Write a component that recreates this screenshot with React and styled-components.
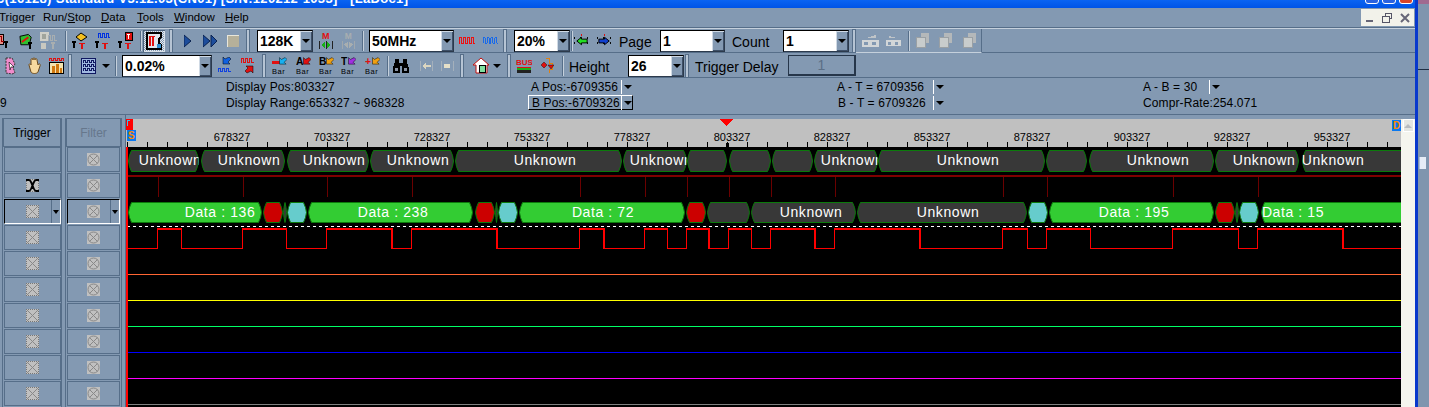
import React from 'react';
import styled, { createGlobalStyle } from 'styled-components';

const PANEL = '#8399b2';
const EDGE = '#566e89';
const SANS = '"Liberation Sans", Arial, sans-serif';

const GlobalStyle = createGlobalStyle`
  html, body { margin: 0; padding: 0; background: ${PANEL}; overflow: hidden; }
  body { font-family: ${SANS}; color: #000; }
`;

const Frame = styled.div`
  display: flex;
  width: 1429px;
  height: 407px;
  overflow: hidden;
`;

const AppWindow = styled.div`
  display: flex;
  flex-direction: column;
  width: 1415px;
  flex: none;
  background: ${PANEL};
`;

const WindowBorder = styled.div`
  width: 3px;
  flex: none;
  background: #0838cc;
`;

const BehindWindow = styled.div`
  flex: 1;
  display: flex;
  flex-direction: column;
  background: #7f95ae;
`;

const BehindTop = styled.div`
  height: 4px;
  background: #a06a90;
`;

const BehindToolbar = styled.div`
  height: 65px;
  border-bottom: 1px solid #1f2f44;
`;

const BehindScroll = styled.div`
  width: 6px;
  height: 12px;
  margin: 87px 0 0 1px;
  background: #e6ecf6;
  border-left: 1px solid #a9bde0;
`;

const TitleBar = styled.div`
  height: 8px;
  flex: none;
  display: flex;
  justify-content: space-between;
  align-items: flex-end;
  overflow: hidden;
  background: linear-gradient(#0a64f2, #0054e6);
`;

const TitleText = styled.div`
  margin: -10px 0 0 -5px;
  font: bold 13px/18px ${SANS};
  letter-spacing: 0.32px;
  color: #fff;
  white-space: nowrap;
  align-self: flex-start;
`;

const TitleButtons = styled.div`
  display: flex;
  gap: 3px;
  margin: 0 2px 4px 0;
`;

const TitleButton = styled.div`
  width: 12px;
  height: 12px;
  border: 1px solid #fff;
  border-radius: 3px;
  background: ${(p) => (p.$close ? '#d8452a' : '#2a63e0')};
`;

const MenuBar = styled.div`
  height: 20px;
  flex: none;
  display: flex;
  justify-content: space-between;
  align-items: center;
  border-bottom: 1px solid ${EDGE};
  box-sizing: border-box;
`;

const MenuList = styled.div`
  display: flex;
  margin: -2px 0 0 -1px;
`;

const MenuItem = styled.div`
  font-size: 11.5px;
  line-height: 16px;
  width: ${(p) => p.$w}px;
`;

const MdiButtons = styled.div`
  display: flex;
  align-items: center;
  justify-content: space-around;
  width: 53px;
  height: 17px;
  margin-right: 1px;
  background: #f2f2ea;
`;

const Toolbar = styled.div`
  height: 25px;
  flex: none;
  display: flex;
  align-items: center;
  box-sizing: border-box;
  border-top: 1px solid ${(p) => (p.$light ? '#c5d0dc' : 'transparent')};
  border-bottom: 1px solid ${EDGE};
  white-space: nowrap;
`;

const Slot = styled.div`
  flex: none;
  width: ${(p) => p.$w}px;
  margin-left: ${(p) => p.$ml}px;
  height: 20px;
  display: flex;
  align-items: center;
  justify-content: center;
`;

const Pressed = styled(Slot)`
  height: 22px;
  background: repeating-conic-gradient(#e4eaf0 0 25%, #8399b2 0 50%) 0 0 / 2px 2px;
  box-shadow: inset 1px 1px 0 #4c627c, inset -1px -1px 0 #d8e0e8;
`;

const Sep = styled.div`
  flex: none;
  width: 1px;
  height: 20px;
  margin-left: ${(p) => p.$ml}px;
  background: #c5d0dc;
  border-left: 1px solid ${EDGE};
`;

const Grip = styled.div`
  flex: none;
  width: 2px;
  height: 22px;
  margin-left: ${(p) => p.$ml}px;
  background: #b6c4d4;
  border: 1px solid ${EDGE};
`;

const ToolLabel = styled.div`
  flex: none;
  width: ${(p) => p.$w}px;
  margin: 2px 0 0 ${(p) => p.$ml}px;
  font-size: 14px;
  line-height: 20px;
`;

const ComboBox = styled.div`
  flex: none;
  display: flex;
  width: ${(p) => p.$w}px;
  margin-left: ${(p) => p.$ml}px;
  height: 22px;
  box-sizing: border-box;
  border: 1px solid #000;
  border-right-color: #2c3a4c;
  border-bottom-color: #2c3a4c;
  background: #fff;
`;

const ComboValue = styled.div`
  flex: 1;
  padding-left: 2px;
  font: bold 14px/20px ${SANS};
`;

const ComboArrow = styled.div`
  width: 12px;
  flex: none;
  display: flex;
  align-items: center;
  justify-content: center;
  background: ${PANEL};
  box-shadow: inset 1px 1px 0 #cfd9e4, inset -1px -1px 0 #3e5068;
`;

const Caret = styled.div`
  width: 0;
  height: 0;
  flex: none;
  border-left: 4px solid transparent;
  border-right: 4px solid transparent;
  border-top: 4px solid #000;
`;

const DisabledBox = styled.div`
  flex: none;
  width: ${(p) => p.$w}px;
  margin-left: ${(p) => p.$ml}px;
  height: 21px;
  box-sizing: border-box;
  border: 1px solid #26364a;
  border-width: 1px 2px 2px 1px;
  text-align: center;
  font-size: 14px;
  line-height: 18px;
  color: #5c6f86;
`;

const DisabledEnd = styled.div`
  display: flex;
  align-items: center;
  align-self: stretch;
  border-bottom: 1px solid #c5d0dc;
  border-right: 1px solid ${EDGE};
  margin-bottom: -1px;
  padding-right: 3px;
`;

const InfoBar = styled.div`
  height: 37px;
  flex: none;
  box-sizing: border-box;
  display: grid;
  grid-template-columns: 226px 302px 309px 306px 1fr;
  grid-template-rows: 16px 16px;
  padding-top: 1px;
  border-bottom: 1px solid ${EDGE};
  font-size: 12px;
  letter-spacing: 0.12px;
`;

const InfoCell = styled.div`
  display: flex;
  align-items: center;
  white-space: nowrap;
  padding-left: ${(p) => p.$pl || 0}px;
`;

const InfoText = styled.div`
  width: ${(p) => p.$w}px;
  flex: none;
`;

const InfoDivider = styled.div`
  width: 1px;
  height: 14px;
  background: #fff;
  margin-right: 2px;
  flex: none;
`;

const SelectedInfo = styled(InfoCell)`
  width: 105px;
  height: 15px;
  box-sizing: border-box;
  border: 1px solid;
  border-color: #fff #000 #000 #fff;
`;

const Main = styled.div`
  flex: 1;
  display: flex;
  min-height: 0;
`;

const SidePanel = styled.div`
  width: 126px;
  flex: none;
  display: flex;
  box-sizing: border-box;
  padding: 3px 0 0 2px;
  gap: 3px;
  border-right: 1px solid ${EDGE};
  overflow: hidden;
`;

const SideColumn = styled.div`
  width: ${(p) => p.$w}px;
  flex: none;
  box-sizing: border-box;
  display: flex;
  flex-direction: column;
  align-items: center;
  border-left: 1px solid ${EDGE};
  border-right: 1px solid ${EDGE};
`;

const SideHeader = styled.div`
  width: 100%;
  height: 29px;
  flex: none;
  box-sizing: border-box;
  border: 1px solid ${EDGE};
  display: flex;
  align-items: center;
  justify-content: center;
  font-size: 12px;
  color: ${(p) => (p.$muted ? '#66778c' : '#000')};
`;

const SideCell = styled.div`
  position: relative;
  width: ${(p) => p.$w}px;
  height: 25px;
  flex: none;
  margin-bottom: 1px;
  box-sizing: border-box;
  border: 1px solid;
  border-color: ${(p) => (p.$selected ? '#000 #fff #fff #000' : EDGE)};
  display: flex;
  align-items: center;
  justify-content: center;
`;

const CellDrop = styled.div`
  position: absolute;
  top: 0;
  right: 0;
  bottom: 0;
  width: 8px;
  border-left: 1px solid ${EDGE};
  display: flex;
  align-items: center;
  justify-content: center;
  & > div {
    border-left-width: 3px;
    border-right-width: 3px;
  }
`;

const WaveSvg = styled.svg`
  width: 1275px;
  height: 292px;
  flex: none;
  display: block;
  margin-top: 0;
`;

const RulerLabel = styled.text`
  font: 11px ${SANS};
  fill: #000;
  text-anchor: middle;
`;

const BusLabel = styled.text`
  font: 14px ${SANS};
  letter-spacing: 0.6px;
  fill: #fff;
  text-anchor: middle;
`;

const MarkerLabel = styled.text`
  font: bold 10px ${SANS};
  fill: #ff8a00;
`;

const ScrollBar = styled.div`
  width: 14px;
  flex: none;
  margin-top: 4px;
  background: #f5f5ee;
  display: flex;
  justify-content: center;
`;

const ScrollUp = styled.div`
  width: 11px;
  height: 13px;
  background: #e4e6e2;
  border: 1px solid #fff;
  box-sizing: border-box;
  display: flex;
  align-items: center;
  justify-content: center;
  &::after {
    content: '';
    border-left: 4px solid transparent;
    border-right: 4px solid transparent;
    border-bottom: 4px solid #b8bcc0;
  }
`;

// toolbar drawings
const Ico = ({ w = 16, h = 18, children }) => (
  <svg width={w} height={h} viewBox={`0 0 ${w} ${h}`} shapeRendering="crispEdges">{children}</svg>
);

const Pin = ({ x, y, c = '#000' }) => (
  <path d={`M${x} ${y}h4v2h-1v5h-2v-5h-1z`} fill={c} />
);

const Pulse = ({ x, y, c, n = 3, w = 2, h = 4 }) => {
  let d = `M${x} ${y + h}`;
  for (let i = 0; i < n; i++) d += `v-${h}h${w}v${h}h${w}`;
  return <path d={d} fill="none" stroke={c} strokeWidth="1" />;
};

const WaveIcon = ({ c }) => (
  <Ico h={10}><Pulse x={0.5} y={1.5} c={c} n={4} w={2} h={6} /></Ico>
);

const PlayIcon = ({ n = 1 }) => (
  <Ico w={n === 1 ? 8 : 15} h={14}>
    <path d="M0 1l7 6-7 6z" fill="#1d4d9c" stroke="#0b2350" strokeWidth="1" shapeRendering="auto" />
    {n > 1 && <path d="M8 1l6 6-6 6z" fill="#1d4d9c" stroke="#0b2350" strokeWidth="1" shapeRendering="auto" />}
  </Ico>
);

const WaveBoxIcon = () => (
  <Ico w={17} h={16}>
    <rect x="0" y="1" width="10" height="10" fill="#e98a84" stroke="#000" />
    <Pulse x={2.5} y={3.5} c="#900" n={2} w={2} h={5} />
    <Pin x={11} y={8} />
  </Ico>
);

const GreenBoxIcon = () => (
  <Ico h={16}>
    <path d="M1 3l9-2 3 3-2 8-9 0z" fill="#2fbf2f" stroke="#000" shapeRendering="auto" />
    <path d="M3 9l7-5" stroke="#e01010" strokeWidth="2" shapeRendering="auto" />
    <Pin x={10} y={9} />
  </Ico>
);

const GhostTrigIcon = () => (
  <Ico w={18} h={19}>
    <rect x="0" y="1" width="9" height="9" fill="#cfcfc8" />
    <rect x="2" y="3" width="4" height="5" fill="#a0a49c" />
    <Pulse x={8.5} y={4.5} c="#a8aeb0" n={2} w={2} h={5} />
    <rect x="1" y="12" width="5" height="6" fill="#c8c8c0" />
    <Pin x={11} y={11} c="#a8aeb0" />
  </Ico>
);

const TrigBadgeIcon = ({ kind }) => (
  <Ico w={15} h={18}>
    <Pin x={0} y={9} />
    {kind === 'eye' && <path d="M4 5l5-4 6 4-6 4z" fill="#f4c020" stroke="#000" shapeRendering="auto" />}
    {kind === 'wave' && <Pulse x={3.5} y={1.5} c="#0030e0" n={3} w={2} h={4} />}
    {kind === 'box' && <><rect x="7" y="0" width="7" height="8" fill="#e01010" stroke="#000" /><rect x="9" y="2" width="3" height="1" fill="#fff" /><rect x="10" y="2" width="1" height="5" fill="#fff" /></>}
    <path d="M7 11h6v1h-2v5h-2v-5h-2z" fill="#e01010" />
  </Ico>
);

const TimeBaseIcon = () => (
  <Ico w={18} h={18}>
    <path d="M2 1h14v4l-2 2v4l2 2v4h-14z" fill="#dfe6ee" stroke="#000" strokeWidth="2" />
    <rect x="4" y="4" width="2" height="10" fill="#e01010" />
    <rect x="7" y="4" width="2" height="10" fill="#e01010" />
    <rect x="4" y="4" width="6" height="1" fill="#e01010" />
    <rect x="12" y="12" width="4" height="4" fill="#2f8fd0" />
  </Ico>
);

const StopIcon = () => (
  <Ico w={12} h={12}>
    <rect x="0" y="0" width="12" height="12" fill="#b5b09a" stroke="#e8e6da" />
  </Ico>
);

const MergeIcon = ({ ghost }) => (
  <Ico h={18}>
    <text x="4" y="7" fontSize="9" fontWeight="bold" fontFamily={SANS} fill={ghost ? '#a8aeb0' : '#e01010'}>M</text>
    <path d="M1 9h1v8h-1zM14 9h1v8h-1zM8 9h1v8h-1z" fill={ghost ? '#a0a8ae' : '#222'} />
    <path d="M3 13l4-3v6zM13 13l-4-3v6z" fill={ghost ? '#a8aeb0' : '#18b018'} />
  </Ico>
);

const ArrowTIcon = ({ c, dir }) => (
  <Ico h={16}>
    <path d="M6 0h4v1h-1v2h-2v-2h-1z" fill="#e01010" />
    <path d="M1 4v2M1 9v2M14 4v2M14 9v2M7 4v2M7 9v2" stroke="#000" />
    <path d={dir < 0 ? 'M3 8l5-4v2h6v4h-6v2z' : 'M13 8l-5-4v2h-6v4h6v2z'} fill={c} stroke="#000" shapeRendering="auto" />
  </Ico>
);

const GhostKeysIcon = ({ flip }) => (
  <Ico w={17} h={14}>
    <path d={flip ? 'M3 1l10 3h-10z' : 'M14 1l-10 3h10z'} fill="#bfc4c8" />
    <rect x="0" y="6" width="17" height="7" fill="#d2d6d8" />
    <rect x="2" y="8" width="4" height="3" fill={PANEL} />
    <rect x="10" y="8" width="4" height="3" fill={PANEL} />
  </Ico>
);

const GhostPagesIcon = () => (
  <Ico w={13} h={15}>
    <rect x="5" y="0" width="8" height="10" fill="#b4b8ba" />
    <rect x="0" y="4" width="9" height="10" fill="#c8cccc" stroke="#9aa0a4" />
  </Ico>
);

const PageSelectIcon = () => (
  <Ico w={11} h={18}>
    <path d="M1 1h6l3 6-2 3 2 6-3 1-6-1z" fill="#f08ccc" stroke="#333" strokeDasharray="2 1" shapeRendering="auto" />
    <path d="M4 5l5 5-3 0-1 3z" fill="#fff" stroke="#000" strokeWidth="0.6" shapeRendering="auto" />
  </Ico>
);

const HandIcon = () => (
  <Ico h={18}>
    <path d="M3 8c0-2 2-1 2 0V3c0-2 2-2 2 0 0-3 2-3 2 0 0-2 2-2 2 0l1 5c1-2 3-1 2 1l-2 6c-1 2-6 2-7 0z" fill="#f6d9a0" stroke="#6a4a20" shapeRendering="auto" />
  </Ico>
);

const ChartIcon = () => (
  <Ico w={15} h={18}>
    <Pulse x={0.5} y={1.5} c="#e01010" n={4} w={2} h={2} />
    <rect x="0.5" y="5.5" width="14" height="11" fill="#f4e4b0" stroke="#000" />
    <rect x="3" y="9" width="3" height="7" fill="#d07810" />
    <rect x="7" y="7" width="3" height="9" fill="#d07810" />
    <rect x="11" y="11" width="2" height="5" fill="#d07810" />
  </Ico>
);

const GridWaveIcon = () => (
  <Ico w={15} h={16}>
    <rect x="0.5" y="0.5" width="14" height="15" fill="#9fb8e0" stroke="#101860" />
    <Pulse x={2.5} y={2.5} c="#101860" n={3} w={2} h={2} />
    <Pulse x={2.5} y={6.5} c="#101860" n={3} w={2} h={2} />
    <Pulse x={2.5} y={10.5} c="#101860" n={3} w={2} h={2} />
  </Ico>
);

const DiagArrow = ({ x = 0, y = 0, c }) => (
  <path transform={`translate(${x} ${y})`} d="M7 0l2 2-3 3 2 2H1V0l2 2z" fill={c} stroke="#000" strokeWidth="0.5" shapeRendering="auto" />
);

const ZoomWaveIcon = ({ red }) => (
  <Ico w={14} h={17}>
    {red ? (
      <>
        <Pulse x={0.5} y={1.5} c="#e01010" n={3} w={2} h={4} />
        <g transform="translate(14 17) rotate(180)"><DiagArrow x={1} y={1} c="#e01010" /></g>
      </>
    ) : (
      <>
        <DiagArrow x={4} y={0} c="#1060e0" />
        <Pulse x={0.5} y={11.5} c="#1040e0" n={3} w={2} h={3} />
      </>
    )}
  </Ico>
);

const BarIcon = ({ glyph, tone, arrow }) => (
  <Ico h={20}>
    {glyph === '-' ? <rect x="0" y="5" width="8" height="3" fill={tone} /> : (
      <text x="0" y="9" fontSize="11" fontWeight="bold" fontFamily={SANS} fill={tone}>{glyph}</text>
    )}
    <DiagArrow x={7} y={1} c={arrow} />
    <text x="0" y="19" fontSize="8" fontFamily={SANS} letterSpacing="0.6" fill="#000">Bar</text>
  </Ico>
);

const BinocularIcon = () => (
  <Ico h={16}>
    <path d="M2 1h4v4h4V1h4v3l2 6v5H9V8H7v7H0v-5l2-6z" fill="#000" />
    <rect x="2" y="10" width="3" height="3" fill="#8a94a4" />
    <rect x="11" y="10" width="3" height="3" fill="#8a94a4" />
  </Ico>
);

const GhostJumpIcon = ({ dot }) => (
  <Ico w={14} h={12}>
    <path d="M1 1v10M13 1v10" stroke="#a4b0bc" />
    {dot ? <rect x="4" y="4" width="6" height="4" fill="#e6e0c8" /> : <path d="M3 6l4-3v2h5v2H7v2z" fill="#dcd6c0" />}
  </Ico>
);

const HomeIcon = () => (
  <Ico w={17} h={17}>
    <path d="M0 8l8-7 8 7h-2v8H3V8z" fill="#fff" stroke="#c01010" shapeRendering="auto" />
    <rect x="6" y="8" width="6" height="7" fill="#80e0a0" stroke="#000" />
  </Ico>
);

const BusIcon = () => (
  <Ico h={16}>
    <text x="0" y="7" fontSize="8" fontWeight="bold" fontFamily={SANS} fill="#e01010">BUS</text>
    <rect x="1" y="9" width="14" height="1" fill="#e01010" />
    <rect x="1" y="10" width="14" height="2" fill="#18b018" />
    <rect x="1" y="12" width="14" height="3" fill="#222" />
  </Ico>
);

const SwapIcon = () => (
  <Ico w={13} h={17}>
    <path d="M5 1h3v5h3v6H8v4" fill="none" stroke="#e08010" />
    <path d="M0 8l3-3 3 3-3 3zM7 8h6l-3 4z" fill="#e01010" stroke="#000" strokeWidth="0.4" shapeRendering="auto" />
  </Ico>
);

const MdiMin = () => <Ico w={10} h={10}><rect x="1" y="7" width="7" height="2" fill="#667" /></Ico>;
const MdiMax = () => (
  <Ico w={10} h={10}>
    <path d="M3.5 2.5v-2h6v5h-2" fill="none" stroke="#556" />
    <rect x="0.5" y="3.5" width="7" height="6" fill="none" stroke="#556" />
  </Ico>
);
const MdiClose = () => <Ico w={10} h={10}><path d="M1 1l8 8M9 1l-8 8" stroke="#667" strokeWidth="2" shapeRendering="auto" /></Ico>;

const Dither = styled.div`
  width: 13px;
  height: 13px;
  flex: none;
  background: #c0c0c0;
  border: ${(p) => (p.$round ? '0' : '1px dotted #777')};
  box-sizing: border-box;
`;

const EmptyTrigger = () => (
  <Dither>
    <svg width="11" height="11" viewBox="0 0 11 11" display="block"><path d="M0 0l11 11M11 0L0 11" stroke="#888" /></svg>
  </Dither>
);

const EmptyFilter = () => (
  <Dither $round>
    <svg width="13" height="13" viewBox="0 0 13 13" display="block">
      <circle cx="6.5" cy="6.5" r="5.5" fill="none" stroke="#888" />
      <path d="M2.5 2.5l8 8M10.5 2.5l-8 8" stroke="#888" />
    </svg>
  </Dither>
);

const EdgeTrigger = () => (
  <Dither>
    <svg width="13" height="13" viewBox="0 0 13 13" display="block" style={{ margin: -1 }}>
      <path d="M0 1h3c3 0 4 11 7 11h3M0 12h3c3 0 4-11 7-11h3" fill="none" stroke="#000" strokeWidth="2" />
    </svg>
  </Dither>
);

const Combo = ({ w, ml, value }) => (
  <ComboBox $w={w} $ml={ml}>
    <ComboValue>{value}</ComboValue>
    <ComboArrow><Caret /></ComboArrow>
  </ComboBox>
);

// waveform data, in page pixels
const U = 'Unknown';
const topBus = [
  [128, 199, U, 170], [201, 285, U, 249], [287, 369, U, 334], [370, 454, U, 418],
  [455, 622, U, 545], [623, 687, U, 661], [687, 727], [729, 771], [772, 813],
  [814, 878, U, 852], [878, 1045, U, 968], [1046, 1087], [1089, 1214, U, 1158],
  [1215, 1299, U, 1264], [1302, 1410, U, 1333],
];
const G = '#33cc33';
const R = '#cc0000';
const C = '#66cccc';
const D = '#383838';
const lowBus = [
  [128, 262, 'Data : 136', 220, G], [263, 283, '', 0, R], [283, 287, '', 0, D], [287, 307, '', 0, C],
  [308, 473, 'Data : 238', 393, G], [475, 495, '', 0, R], [495, 498, '', 0, D], [498, 518, '', 0, C],
  [519, 685, 'Data : 72', 603, G], [686, 706, '', 0, R], [707, 750, '', 0, D],
  [751, 856, U, 811, D], [857, 1027, U, 948, D], [1028, 1048, '', 0, C],
  [1049, 1214, 'Data : 195', 1134, G], [1215, 1235, '', 0, R], [1235, 1239, '', 0, D], [1239, 1259, '', 0, C],
  [1261, 1410, 'Data : 15', 1293, G],
];
const strobes = [158, 243, 327, 412, 580, 645, 687, 729, 771, 835, 1003, 1047, 1173, 1258];
// rise, fall, thick falling edge
const pulses = [
  [158, 181, 0], [243, 286, 0], [327, 392, 1], [412, 497, 1], [580, 604, 1], [645, 667, 0],
  [687, 709, 1], [729, 751, 0], [771, 815, 1], [835, 920, 1], [1003, 1027, 0],
  [1047, 1090, 0], [1173, 1238, 0], [1258, 1343, 1],
];
const channels = [
  [274, '#ff6633'], [300, '#ffff00'], [326, '#00ff66'],
  [352, '#0000ff'], [378, '#ff00ff'], [404, '#808080'],
];
const labels = Array.from({ length: 12 }, (_, i) => 678327 + i * 25000);
const ticks = Array.from({ length: 64 }, (_, i) => 127 + i * 20);

const Hex = ({ x1, x2, y, h, fill, text, cx }) => {
  const c = Math.min(3, (x2 - x1) / 2);
  const s = Math.min(1, c / 3);
  const points = [
    [x1 + c, y], [x2 - c, y], [x2 - s, y + 5], [x2, y + h / 2], [x2 - s, y + h - 5],
    [x2 - c, y + h], [x1 + c, y + h], [x1 + s, y + h - 5], [x1, y + h / 2], [x1 + s, y + 5],
  ];
  return (
    <g>
      <polygon points={points.map((p) => p.join(',')).join(' ')} fill={fill} stroke="#0b7a0b" strokeWidth="1" shapeRendering="auto" />
      {text && (
        <svg x={x1} y={y} width={x2 - x1} height={h} viewBox={`${x1} ${y} ${x2 - x1} ${h}`}>
          <BusLabel x={cx} y={y + h / 2 + 4}>{text}</BusLabel>
        </svg>
      )}
    </g>
  );
};

const Waveforms = () => (
  <WaveSvg viewBox="126 115 1275 292" shapeRendering="crispEdges">
    <rect x="126" y="119" width="1275" height="28" fill="#c0c0c0" />
    <rect x="126" y="147" width="1275" height="260" fill="#000" />
    {ticks.map((x) => <rect key={x} x={x} y="142" width="1" height="5" fill="#000" />)}
    <rect x="726" y="143" width="3" height="4" fill="#000" />
    {labels.map((v, i) => <RulerLabel key={v} x={232 + i * 100} y="141">{v}</RulerLabel>)}
    <polygon points="720,119 733,119 726.5,126" fill="#ff0000" />
    <rect x="127" y="130" width="9" height="11" fill="#0a78f0" />
    <MarkerLabel x="128" y="139">S</MarkerLabel>
    <rect x="126" y="119" width="7" height="11" fill="#ff0000" />
    <path d="M127 120h3v1h-2v5h-1z" fill="#30c0f0" />
    <rect x="1392" y="120" width="9" height="11" fill="#0a78f0" />
    <MarkerLabel x="1393" y="129">D</MarkerLabel>

    {topBus.map(([a, b, t, cx]) => <Hex key={a} x1={a + 0.5} x2={b - 0.5} y={150.5} h={21} fill={D} text={t} cx={cx} />)}

    <rect x="127" y="175" width="1274" height="2" fill="#800000" />
    {strobes.map((x) => <rect key={x} x={x} y="177" width="1" height="20" fill="#6a0000" />)}

    {lowBus.map(([a, b, t, cx, f]) => <Hex key={a} x1={a + 0.5} x2={b - 0.5} y={202.5} h={20} fill={f} text={t} cx={cx} />)}

    <line x1="127" y1="226.5" x2="1401" y2="226.5" stroke="#fff" strokeDasharray="3 3" />

    <rect x="127" y="248" width="1274" height="1" fill="#ff0000" />
    {pulses.map(([up, down, thick]) => (
      <g key={up}>
        <rect x={up - 1} y="228" width={down - up + 2} height="21" fill="#000" />
        <rect x={up - 1} y="228" width={down - up + 2} height="2" fill="#ff0000" />
        <rect x={up - 1} y="228" width="1" height="21" fill="#ff0000" />
        <rect x={down - (thick ? 1 : 0)} y="228" width={thick ? 2 : 1} height="21" fill="#ff0000" />
      </g>
    ))}

    {channels.map(([y, c]) => <rect key={y} x="127" y={y} width="1274" height="1" fill={c} />)}
    <rect x="126" y="147" width="2" height="260" fill="#ff0000" />
  </WaveSvg>
);

const rowCount = 10;

const Sidebar = () => (
  <SidePanel>
    <SideColumn $w={60}>
      <SideHeader>Trigger</SideHeader>
      {Array.from({ length: rowCount }, (_, i) => (
        <SideCell key={i} $w={57} $selected={i === 2}>
          {i === 1 ? <EdgeTrigger /> : i > 0 && <EmptyTrigger />}
          {i === 2 && <CellDrop><Caret /></CellDrop>}
        </SideCell>
      ))}
    </SideColumn>
    <SideColumn $w={57}>
      <SideHeader $muted>Filter</SideHeader>
      {Array.from({ length: rowCount }, (_, i) => (
        <SideCell key={i} $w={53} $selected={i === 2}>
          <EmptyFilter />
          {i === 2 && <CellDrop><Caret /></CellDrop>}
        </SideCell>
      ))}
    </SideColumn>
  </SidePanel>
);

const menus = [
  ['Trigger', null, 44], ['Run/', 'S', 58, 'top'], ['', 'D', 36, 'ata'],
  ['', 'T', 37, 'ools'], ['', 'W', 51, 'indow'], ['', 'H', 30, 'elp'],
];

export default function App() {
  return (
    <Frame>
      <GlobalStyle />
      <AppWindow>
        <TitleBar>
          <TitleText>C(16128) Standard V3.12.03(CN01) [S/N:120212-1033] - [LaDoc1]</TitleText>
          <TitleButtons>
            <TitleButton />
            <TitleButton />
            <TitleButton $close />
          </TitleButtons>
        </TitleBar>

        <MenuBar>
          <MenuList>
            {menus.map(([pre, u, w, post]) => (
              <MenuItem key={pre + u} $w={w}>{pre}{u && <u>{u}</u>}{post}</MenuItem>
            ))}
          </MenuList>
          <MdiButtons>
            <MdiMin />
            <MdiMax />
            <MdiClose />
          </MdiButtons>
        </MenuBar>

        <Toolbar $light>
          <Slot $ml={-7} $w={17}><WaveBoxIcon /></Slot>
          <Slot $ml={9} $w={15}><GreenBoxIcon /></Slot>
          <Slot $ml={6} $w={18}><GhostTrigIcon /></Slot>
          <Sep $ml={7} />
          <Slot $ml={5} $w={15}><TrigBadgeIcon kind="eye" /></Slot>
          <Slot $ml={8} $w={15}><TrigBadgeIcon kind="wave" /></Slot>
          <Slot $ml={8} $w={15}><TrigBadgeIcon kind="box" /></Slot>
          <Sep $ml={7} />
          <Pressed $ml={1} $w={22}><TimeBaseIcon /></Pressed>
          <Grip $ml={4} />
          <Slot $ml={11} $w={8}><PlayIcon /></Slot>
          <Slot $ml={11} $w={15}><PlayIcon n={2} /></Slot>
          <Slot $ml={9} $w={12}><StopIcon /></Slot>
          <Grip $ml={7} />
          <Combo ml={7} w={56} value="128K" />
          <Slot $ml={5} $w={16}><MergeIcon /></Slot>
          <Slot $ml={7} $w={15}><MergeIcon ghost /></Slot>
          <Sep $ml={6} />
          <Combo ml={5} w={85} value="50MHz" />
          <Slot $ml={5} $w={16}><WaveIcon c="#ee1111" /></Slot>
          <Slot $ml={8} $w={15}><WaveIcon c="#1166ee" /></Slot>
          <Grip $ml={5} />
          <Combo ml={7} w={56} value="20%" />
          <Sep $ml={1} />
          <Slot $ml={1} $w={15}><ArrowTIcon c="#22dd22" dir={-1} /></Slot>
          <Slot $ml={8} $w={15}><ArrowTIcon c="#1040d0" dir={1} /></Slot>
          <ToolLabel $ml={7} $w={33}>Page</ToolLabel>
          <Combo ml={8} w={65} value="1" />
          <ToolLabel $ml={7} $w={35}>Count</ToolLabel>
          <Combo ml={16} w={66} value="1" />
          <Grip $ml={3} />
          <DisabledEnd>
            <Slot $ml={6} $w={17}><GhostKeysIcon /></Slot>
            <Slot $ml={7} $w={15}><GhostKeysIcon flip /></Slot>
            <Sep $ml={7} />
            <Slot $ml={6} $w={13}><GhostPagesIcon /></Slot>
            <Slot $ml={9} $w={15}><GhostPagesIcon /></Slot>
            <Slot $ml={8} $w={17}><GhostPagesIcon /></Slot>
          </DisabledEnd>
        </Toolbar>

        <Toolbar>
          <Slot $ml={5} $w={11}><PageSelectIcon /></Slot>
          <Slot $ml={10} $w={16}><HandIcon /></Slot>
          <Slot $ml={7} $w={15}><ChartIcon /></Slot>
          <Grip $ml={4} />
          <Slot $ml={9} $w={15}><GridWaveIcon /></Slot>
          <Slot $ml={6} $w={8}><Caret /></Slot>
          <Sep $ml={5} />
          <Combo ml={5} w={90} value="0.02%" />
          <Slot $ml={6} $w={14}><ZoomWaveIcon /></Slot>
          <Slot $ml={9} $w={14}><ZoomWaveIcon red /></Slot>
          <Grip $ml={7} />
          <Slot $ml={6} $w={15}><BarIcon glyph="-" tone="#e01010" arrow="#18b0f0" /></Slot>
          <Slot $ml={9} $w={15}><BarIcon glyph="A" tone="#000" arrow="#e01010" /></Slot>
          <Slot $ml={8} $w={15}><BarIcon glyph="B" tone="#000" arrow="#f0a010" /></Slot>
          <Slot $ml={7} $w={15}><BarIcon glyph="T" tone="#000" arrow="#a030e0" /></Slot>
          <Slot $ml={9} $w={15}><BarIcon glyph="+" tone="#e01010" arrow="#f0a010" /></Slot>
          <Sep $ml={7} />
          <Slot $ml={4} $w={16}><BinocularIcon /></Slot>
          <Slot $ml={10} $w={14}><GhostJumpIcon /></Slot>
          <Slot $ml={7} $w={14}><GhostJumpIcon dot /></Slot>
          <Grip $ml={6} />
          <Slot $ml={9} $w={17}><HomeIcon /></Slot>
          <Slot $ml={3} $w={8}><Caret /></Slot>
          <Grip $ml={6} />
          <Slot $ml={5} $w={16}><BusIcon /></Slot>
          <Slot $ml={9} $w={13}><SwapIcon /></Slot>
          <Sep $ml={8} />
          <ToolLabel $ml={5} $w={40}>Height</ToolLabel>
          <Combo ml={19} w={56} value="26" />
          <Grip $ml={1} />
          <ToolLabel $ml={6} $w={83}>Trigger Delay</ToolLabel>
          <DisabledBox $ml={10} $w={68}>1</DisabledBox>
        </Toolbar>

        <InfoBar>
          <InfoCell />
          <InfoCell>Display Pos:803327</InfoCell>
          <InfoCell $pl={3}>
            <InfoText $w={90}>A Pos:-6709356</InfoText>
            <InfoDivider /><Caret />
          </InfoCell>
          <InfoCell>
            <InfoText $w={96}>A - T = 6709356</InfoText>
            <InfoDivider /><Caret />
          </InfoCell>
          <InfoCell>
            <InfoText $w={66}>A - B = 30</InfoText>
            <InfoDivider /><Caret />
          </InfoCell>
          <InfoCell>9</InfoCell>
          <InfoCell>Display Range:653327 ~ 968328</InfoCell>
          <SelectedInfo $pl={3}>
            <InfoText $w={89}>B Pos:-6709326</InfoText>
            <InfoDivider /><Caret />
          </SelectedInfo>
          <InfoCell $pl={1}>
            <InfoText $w={95}>B - T = 6709326</InfoText>
            <InfoDivider /><Caret />
          </InfoCell>
          <InfoCell>Compr-Rate:254.071</InfoCell>
        </InfoBar>

        <Main>
          <Sidebar />
          <Waveforms />
          <ScrollBar><ScrollUp /></ScrollBar>
        </Main>
      </AppWindow>
      <WindowBorder />
      <BehindWindow>
        <BehindTop />
        <BehindToolbar />
        <BehindScroll />
      </BehindWindow>
    </Frame>
  );
}
